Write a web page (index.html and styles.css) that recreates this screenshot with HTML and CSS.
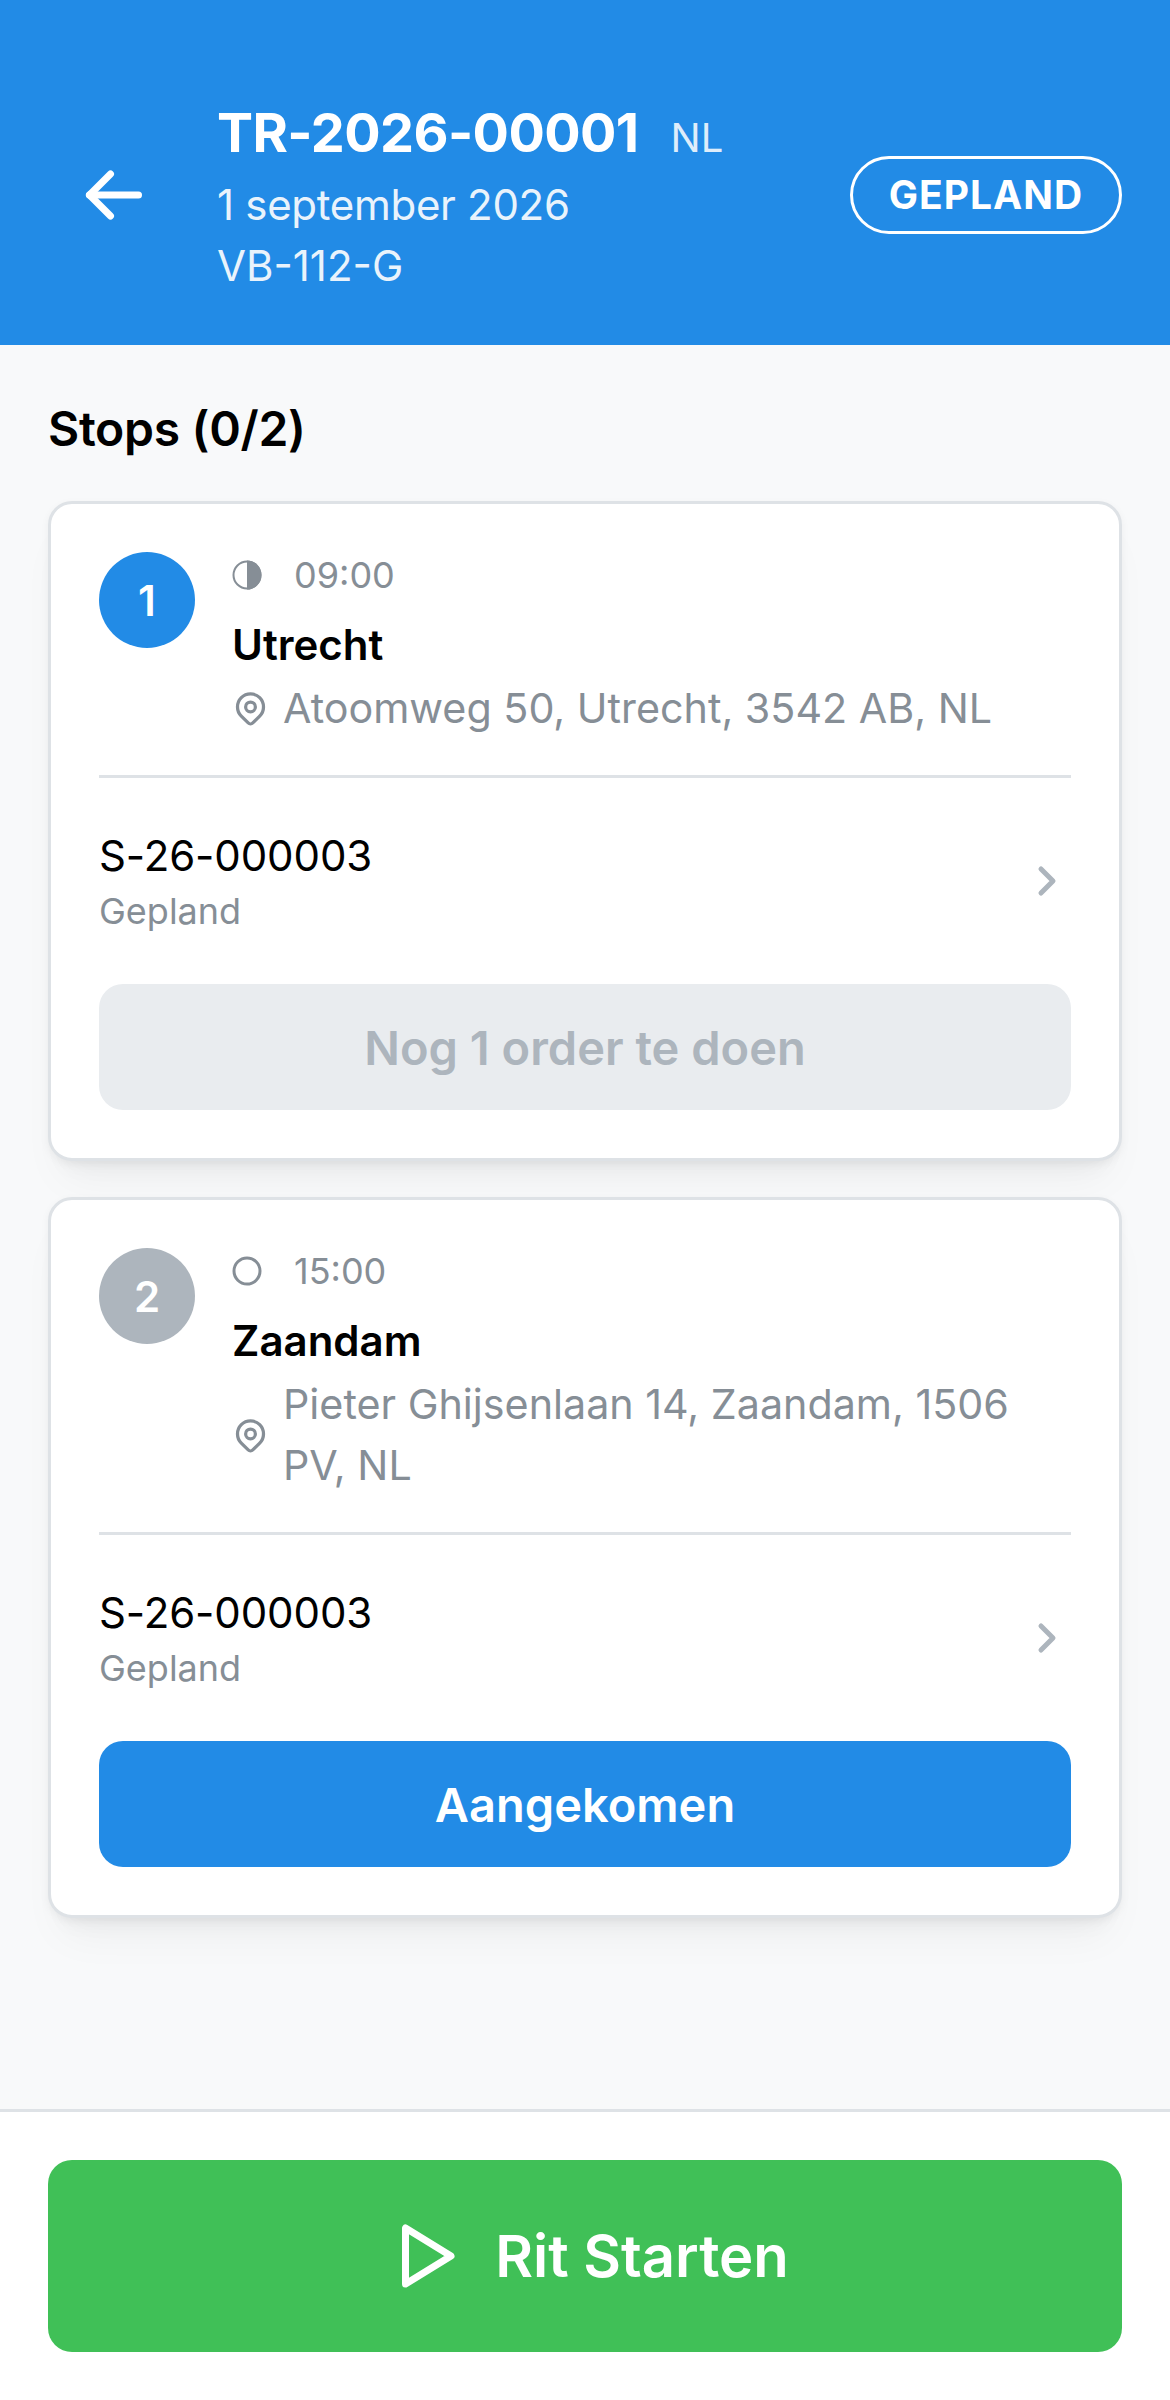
FILE: index.html
```html
<!DOCTYPE html>
<html lang="nl">
<head>
<meta charset="utf-8">
<title>TR-2026-00001</title>
<link rel="stylesheet" href="styles.css">
</head>
<body>
<div class="page">
  <header class="header">
    <svg class="back" viewBox="0 0 24 24" fill="none" stroke="currentColor" stroke-width="2" stroke-linecap="round" stroke-linejoin="round"><path d="M5 12l14 0"/><path d="M5 12l6 6"/><path d="M5 12l6 -6"/></svg>
    <div class="trip">
      <div class="trip-top"><span class="trip-id">TR-2026-00001</span><span class="trip-country">NL</span></div>
      <div class="trip-meta trip-date">1 september 2026</div>
      <div class="trip-meta">VB-112-G</div>
    </div>
    <div class="badge">GEPLAND</div>
  </header>
  <main class="main">
    <h2 class="heading">Stops (0/2)</h2>
    <section class="card">
      <div class="stop">
        <div class="num num-active">1</div>
        <div class="stop-info">
          <div class="time">
            <svg class="time-icon" viewBox="0 0 30 30"><circle cx="15" cy="15" r="13.500" fill="none" stroke="#868e96" stroke-width="2"/><path d="M15 .5a14.500 14.500 0 0 1 0 29z" fill="#868e96"/></svg>
            <span>09:00</span>
          </div>
          <div class="city">Utrecht</div>
          <div class="addr">
            <svg class="pin" viewBox="0 0 24 24" fill="none" stroke="currentColor" stroke-width="2" stroke-linecap="round" stroke-linejoin="round"><path d="M9 11a3 3 0 1 0 6 0a3 3 0 0 0 -6 0"/><path d="M17.657 16.657l-4.243 4.243a2 2 0 0 1 -2.827 0l-4.244 -4.243a8 8 0 1 1 11.314 0z"/></svg>
            <span>Atoomweg 50, Utrecht, 3542 AB, NL</span>
          </div>
        </div>
      </div>
      <div class="order">
        <div>
          <div class="order-id">S-26-000003</div>
          <div class="order-status">Gepland</div>
        </div>
        <svg class="chev" viewBox="0 0 24 24" fill="none" stroke="currentColor" stroke-width="2.500" stroke-linecap="round" stroke-linejoin="round"><path d="M9 6l6 6l-6 6"/></svg>
      </div>
      <div class="action action-off">Nog 1 order te doen</div>
    </section>
    <section class="card">
      <div class="stop">
        <div class="num num-idle">2</div>
        <div class="stop-info">
          <div class="time">
            <svg class="time-icon" viewBox="0 0 30 30"><circle cx="15" cy="15" r="13" fill="none" stroke="#868e96" stroke-width="3"/></svg>
            <span>15:00</span>
          </div>
          <div class="city">Zaandam</div>
          <div class="addr">
            <svg class="pin" viewBox="0 0 24 24" fill="none" stroke="currentColor" stroke-width="2" stroke-linecap="round" stroke-linejoin="round"><path d="M9 11a3 3 0 1 0 6 0a3 3 0 0 0 -6 0"/><path d="M17.657 16.657l-4.243 4.243a2 2 0 0 1 -2.827 0l-4.244 -4.243a8 8 0 1 1 11.314 0z"/></svg>
            <span>Pieter Ghijsenlaan 14, Zaandam, 1506 PV, NL</span>
          </div>
        </div>
      </div>
      <div class="order">
        <div>
          <div class="order-id">S-26-000003</div>
          <div class="order-status">Gepland</div>
        </div>
        <svg class="chev" viewBox="0 0 24 24" fill="none" stroke="currentColor" stroke-width="2.500" stroke-linecap="round" stroke-linejoin="round"><path d="M9 6l6 6l-6 6"/></svg>
      </div>
      <div class="action action-on">Aangekomen</div>
    </section>
  </main>
  <footer class="footer">
    <div class="start">
      <svg class="play" viewBox="0 0 24 24" fill="none" stroke="currentColor" stroke-width="2" stroke-linecap="round" stroke-linejoin="round"><path d="M7 4v16l13 -8z"/></svg>
      <span>Rit Starten</span>
    </div>
  </footer>
</div>
</body>
</html>
```
FILE: styles.css
```css
* { box-sizing: border-box; }
html, body { margin: 0; padding: 0; }
body {
  font-family: Inter, "Liberation Sans", sans-serif;
  background: #f8f9fa;
  color: #000;
}
.page {
  width: 1170px;
  height: 2400px;
  display: flex;
  flex-direction: column;
  overflow: hidden;
}
.header {
  height: 345px;
  flex: none;
  background: #228be6;
  color: #fff;
  display: flex;
  align-items: center;
  padding: 99px 48px 55px 72px;
}
.back { width: 84px; height: 84px; flex: none; margin-right: 61px; }
.trip { flex: 1; min-width: 0; margin-top: 3px; }
.trip-top { display: flex; align-items: baseline; gap: 32px; line-height: 72px; }
.trip-id { font-size: 54px; font-weight: 700; letter-spacing: -.6px; }
.trip-country { font-size: 40px; opacity: .85; }
.trip-meta { font-size: 42px; line-height: 61px; opacity: .9; }
.trip-date { letter-spacing: -.3px; }
.badge {
  flex: none;
  width: 272px;
  height: 78px;
  border: 3px solid #fff;
  border-radius: 39px;
  display: flex;
  align-items: center;
  justify-content: center;
  font-size: 39px;
  font-weight: 700;
  letter-spacing: 1px;
}
.main { flex: 1; padding: 48px 48px 0; }
.heading { margin: 0 0 36px; font-size: 48px; line-height: 72px; font-weight: 600; letter-spacing: -.3px; }
.card {
  background: #fff;
  border: 3px solid #dee2e6;
  border-radius: 24px;
  padding: 48px;
  margin-bottom: 36px;
  box-shadow: 0 3px 9px rgba(0,0,0,.05), 0 30px 45px -15px rgba(0,0,0,.05), 0 21px 21px -15px rgba(0,0,0,.04);
}
.stop {
  display: flex;
  gap: 37px;
  padding-bottom: 36px;
  border-bottom: 3px solid #dee2e6;
}
.num {
  width: 96px;
  height: 96px;
  border-radius: 50%;
  flex: none;
  color: #fff;
  display: flex;
  align-items: center;
  justify-content: center;
  font-size: 42px;
  font-weight: 600;
}
.num-active { background: #228be6; }
.num-idle { background: #adb5bd; }
.stop-info { flex: 1; min-width: 0; }
.time {
  display: flex;
  align-items: center;
  gap: 32px;
  height: 46px;
  font-size: 36px;
  color: #868e96;
}
.time-icon { width: 30px; height: 30px; flex: none; }
.city { margin-top: 14px; font-size: 42px; line-height: 66px; font-weight: 600; }
.addr {
  display: flex;
  align-items: center;
  gap: 13px;
  font-size: 41.25px;
  line-height: 61px;
  color: #868e96;
}
.pin { width: 39px; height: 39px; flex: none; margin-left: -1px; }
.order {
  display: flex;
  align-items: center;
  justify-content: space-between;
  padding: 36px 0;
  height: 206px;
}
.order-id { font-size: 42px; line-height: 60px; letter-spacing: -.1px; }
.order-status { font-size: 36px; line-height: 50px; color: #868e96; }
.chev { width: 48px; height: 48px; color: #adb5bd; flex: none; }
.action {
  height: 126px;
  border-radius: 24px;
  display: flex;
  align-items: center;
  justify-content: center;
  font-size: 47px;
  font-weight: 600;
}
.action-off { background: #e9ecef; color: #adb5bd; }
.action-on { background: #228be6; color: #fff; }
.footer {
  flex: none;
  height: 291px;
  background: #fff;
  border-top: 3px solid #dee2e6;
  padding: 48px;
}
.start {
  height: 192px;
  border-radius: 24px;
  background: #40c057;
  color: #fff;
  display: flex;
  align-items: center;
  justify-content: center;
  gap: 30px;
  font-size: 58px;
  font-weight: 600;
}
.play { width: 84px; height: 84px; flex: none; }
```
